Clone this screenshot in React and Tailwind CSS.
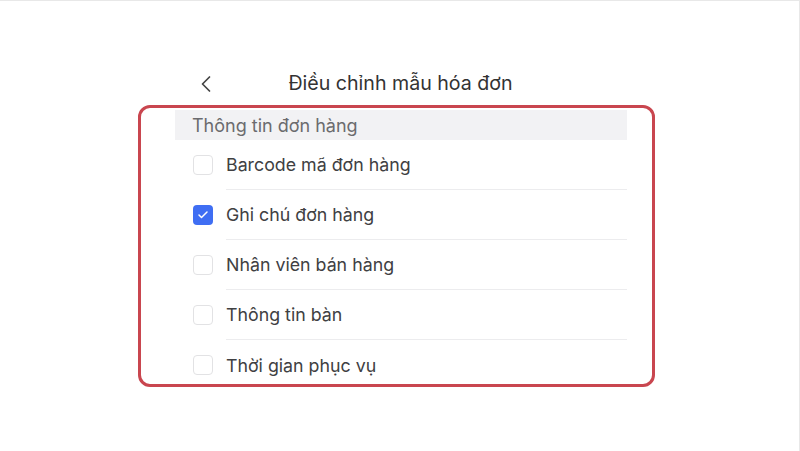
import { useState } from 'react';
import { ChevronLeft, Check } from 'lucide-react';

const FIELDS = [
  { id: 'barcode', label: 'Barcode mã đơn hàng' },
  { id: 'note', label: 'Ghi chú đơn hàng' },
  { id: 'staff', label: 'Nhân viên bán hàng' },
  { id: 'table', label: 'Thông tin bàn' },
  { id: 'time', label: 'Thời gian phục vụ' },
];

function Checkbox({ checked, onChange }) {
  return (
    <button
      onClick={onChange}
      className={
        checked
          ? 'flex h-5 w-5 shrink-0 items-center justify-center rounded-[4px] bg-[#3f6ef3]'
          : 'flex h-5 w-5 shrink-0 items-center justify-center rounded-[4px] border border-[#e2e2e4] bg-white'
      }
    >
      {checked && <Check className="h-3 w-3 text-white" strokeWidth={3} />}
    </button>
  );
}

export default function App() {
  const [selected, setSelected] = useState({ note: true });

  const toggle = (id) => setSelected((s) => ({ ...s, [id]: !s[id] }));

  return (
    <div
      className="h-[451px] w-full overflow-hidden border-t border-r border-[#e8e8e8] bg-white"
      style={{ fontFamily: 'Inter, "Noto Sans", sans-serif' }}
    >
      {/* Thanh tiêu đề */}
      <div className="ml-[175px] mt-[65px] grid h-9 w-[451px] grid-cols-[60px_1fr_60px] items-center">
        <button className="flex items-center pl-[17px] text-[#444]">
          <ChevronLeft className="h-7 w-7" strokeWidth={1.5} />
        </button>
        <h1 className="text-center text-[19.6px] text-[#333]">Điều chỉnh mẫu hóa đơn</h1>
        <div />
      </div>

      {/* Khung các trường hiển thị trên hóa đơn */}
      <div className="ml-[138px] mt-[3px] w-[517px] rounded-[12px] border-[3px] border-[#c9464f] pl-[34px] pr-[25px] pt-[2px]">
        <div className="flex h-[30px] items-center bg-[#f2f2f4] pl-[17px] text-[18px] text-[#6b6b6e]">
          Thông tin đơn hàng
        </div>
        {FIELDS.map((f, i) => {
          const last = i === FIELDS.length - 1;
          return (
            <div
              key={f.id}
              className={
                last
                  ? 'flex h-[44px] items-start gap-[13px] pl-[18px] pt-[15px]'
                  : 'flex h-[50px] items-stretch gap-[13px] pl-[18px]'
              }
            >
              <div className={last ? 'flex items-start' : 'flex items-center'}>
                <Checkbox checked={!!selected[f.id]} onChange={() => toggle(f.id)} />
              </div>
              <div
                className={
                  last
                    ? 'flex-1 pt-[1px] text-[17.8px] leading-5 text-[#404042]'
                    : 'flex flex-1 items-center border-b border-[#ececee] pt-[2px] text-[17.8px] text-[#404042]'
                }
              >
                {f.label}
              </div>
            </div>
          );
        })}
      </div>
    </div>
  );
}
